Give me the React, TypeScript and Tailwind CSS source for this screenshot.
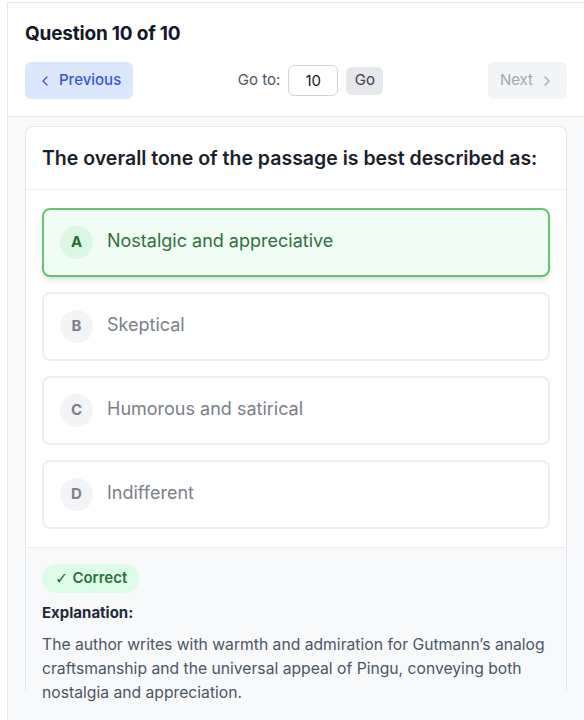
import { ChevronLeft, ChevronRight } from "lucide-react";

type Option = { letter: string; text: string };

const options: Option[] = [
    { letter: "A", text: "Nostalgic and appreciative" },
    { letter: "B", text: "Skeptical" },
    { letter: "C", text: "Humorous and satirical" },
    { letter: "D", text: "Indifferent" },
];

const correct = "A";

function OptionRow({ option }: { option: Option }) {
    const isCorrect = option.letter === correct;
    return (
        <div
            className={
                isCorrect
                    ? "flex items-start gap-[14px] rounded-lg border-2 border-[#62c471] bg-[#f0fdf4] p-4 shadow-md"
                    : "flex items-start gap-[14px] rounded-lg border-2 border-[#eceef0] bg-white p-4"
            }
        >
            <div
                className={
                    isCorrect
                        ? "flex h-[33px] w-[33px] shrink-0 items-center justify-center rounded-full bg-[#dcf7e3] text-[15px] font-bold text-[#2a6b37]"
                        : "flex h-[33px] w-[33px] shrink-0 items-center justify-center rounded-full bg-[#f3f4f6] text-[15px] font-bold text-[#7c818b]"
                }
            >
                {option.letter}
            </div>
            <span
                className={
                    isCorrect
                        ? "pt-px text-[18px] leading-7 text-[#336f3f]"
                        : "pt-px text-[18px] leading-7 text-[#7a7f88]"
                }
            >
                {option.text}
            </span>
        </div>
    );
}

export default function App() {
    return (
        <div className="h-screen bg-white font-['Inter',sans-serif] text-[#111827]">
            <div className="ml-[7px] mt-[2px] h-[718px] border-l border-t border-[#e5e7eb] bg-[#f8f9fb]">
                {/* header */}
                <div className="border-b border-[#e5e7eb] bg-white px-[17px] pb-[17px] pt-[17px]">
                    <h1 className="mb-[14px] text-[19px] font-bold leading-7 tracking-[-0.2px] text-[#111827]">
                        Question 10 of 10
                    </h1>
                    <div className="flex items-center justify-between">
                        <button className="flex h-[37px] items-center gap-1.5 rounded-md bg-[#dbe7fd] px-3 text-[15px] font-medium text-[#3558d6]">
                            <ChevronLeft className="h-4 w-4" />
                            Previous
                        </button>
                        <div className="flex items-center gap-2">
                            <span className="text-[15px] text-[#4b5563]">Go to:</span>
                            <input
                                readOnly
                                value="10"
                                className="h-[31px] w-[50px] rounded-md border border-[#d1d5db] text-center text-[15px] text-[#111827]"
                            />
                            <button className="h-7 w-[37px] rounded-md bg-[#e5e7eb] text-[15px] text-[#374151]">
                                Go
                            </button>
                        </div>
                        <button className="flex h-[37px] items-center gap-1.5 rounded-md bg-[#f3f4f6] px-3 text-[15px] text-[#a2a7b0]">
                            Next
                            <ChevronRight className="h-4 w-4" />
                        </button>
                    </div>
                </div>

                {/* body */}
                <div className="px-[17px] pt-[9px]">
                    <div className="h-[564px] rounded-t-lg border border-b-0 border-[#e5e7eb]">
                        <div className="rounded-t-lg border-b border-[#eceef0] bg-white p-4">
                            <h2 className="text-[19.5px] font-semibold leading-[30px] text-[#1a1f2c]">
                                The overall tone of the passage is best described as:
                            </h2>
                        </div>
                        <div className="flex flex-col gap-[15px] border-b border-[#eceef0] bg-white px-4 pb-[18px] pt-[18px]">
                            {options.map((option) => (
                                <OptionRow key={option.letter} option={option} />
                            ))}
                        </div>
                        <div className="bg-[#f8f9fb] px-4 pt-4">
                            <span className="inline-flex h-[29px] items-center gap-1 rounded-full bg-[#dcfce7] pl-[13px] pr-3 text-[15px] font-semibold text-[#2d6f3a]">
                                <span className="text-[16px] font-bold font-['DejaVu_Sans',sans-serif]">✓</span>
                                Correct
                            </span>
                            <p className="mt-2 text-[15px] font-bold leading-6 text-[#1f2937]">
                                Explanation:
                            </p>
                            <p className="mt-2 text-[15.7px] leading-6 text-[#4b5563]">
                                The author writes with warmth and admiration for Gutmann’s analog craftsmanship and the universal appeal of Pingu, conveying both nostalgia and appreciation.
                            </p>
                        </div>
                    </div>
                </div>
            </div>
        </div>
    );
}
